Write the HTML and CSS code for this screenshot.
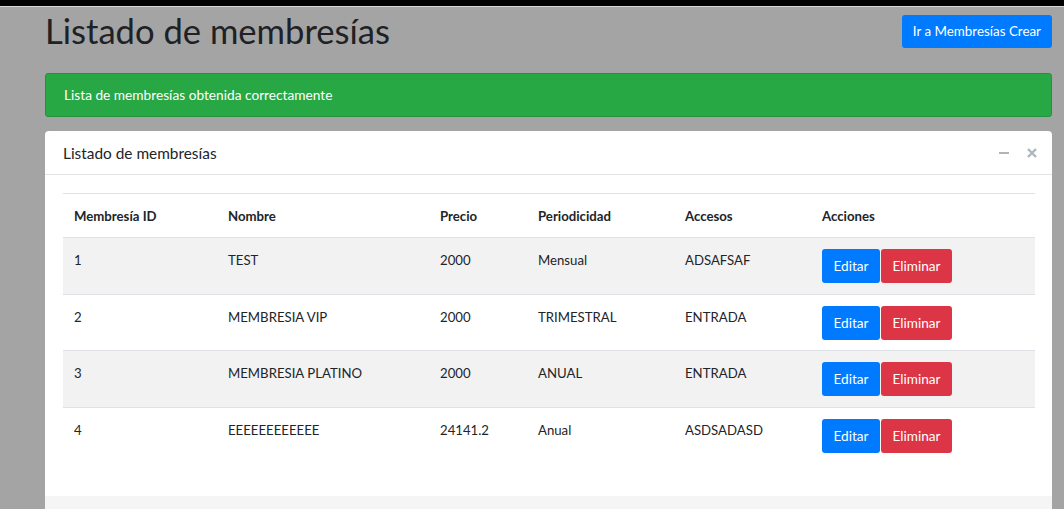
FILE: index.html
```html
<!DOCTYPE html>
<html lang="es">
<head>
<meta charset="utf-8">
<title>Listado de membresías</title>
<link rel="stylesheet" href="styles.css">
</head>
<body>
<div class="topbar"></div>
<main class="content">
  <div class="page-head">
    <h1 class="page-title">Listado de membresías</h1>
    <a class="btn btn-primary btn-create" href="#">Ir a Membresías Crear</a>
  </div>
  <div class="alert">Lista de membresías obtenida correctamente</div>
  <section class="card">
    <header class="card-header">
      <h3 class="card-title">Listado de membresías</h3>
      <div class="card-tools">
        <svg class="tool" width="12" height="12" viewBox="0 0 12 12"><rect x="1" y="5" width="10" height="2" fill="#adb5bd"/></svg>
        <svg class="tool" width="12" height="12" viewBox="0 0 12 12"><path d="M2 2 L10 10 M10 2 L2 10" stroke="#adb5bd" stroke-width="2.4"/></svg>
      </div>
    </header>
    <div class="card-body">
      <table class="table">
        <colgroup>
          <col class="c1"><col class="c2"><col class="c3"><col class="c4"><col class="c5"><col>
        </colgroup>
        <thead>
          <tr><th>Membresía ID</th><th>Nombre</th><th>Precio</th><th>Periodicidad</th><th>Accesos</th><th>Acciones</th></tr>
        </thead>
        <tbody>
          <tr class="odd"><td>1</td><td>TEST</td><td>2000</td><td>Mensual</td><td>ADSAFSAF</td><td><a class="btn btn-primary" href="#">Editar</a><a class="btn btn-danger" href="#">Eliminar</a></td></tr>
          <tr><td>2</td><td>MEMBRESIA VIP</td><td>2000</td><td>TRIMESTRAL</td><td>ENTRADA</td><td><a class="btn btn-primary" href="#">Editar</a><a class="btn btn-danger" href="#">Eliminar</a></td></tr>
          <tr class="odd"><td>3</td><td>MEMBRESIA PLATINO</td><td>2000</td><td>ANUAL</td><td>ENTRADA</td><td><a class="btn btn-primary" href="#">Editar</a><a class="btn btn-danger" href="#">Eliminar</a></td></tr>
          <tr><td>4</td><td>EEEEEEEEEEEE</td><td>24141.2</td><td>Anual</td><td>ASDSADASD</td><td><a class="btn btn-primary" href="#">Editar</a><a class="btn btn-danger" href="#">Eliminar</a></td></tr>
        </tbody>
      </table>
    </div>
    <div class="card-footer"></div>
  </section>
</main>
</body>
</html>
```

FILE: styles.css
```css
* { box-sizing: border-box; }
html, body { margin: 0; padding: 0; }
body {
  background: #a4a4a4;
  font-family: "Source Sans Pro", Lato, "Noto Sans", sans-serif;
  color: #212529;
  height: 509px;
  overflow: hidden;
}
.topbar {
  height: 7px;
  background: #000;
  border-bottom: 1px solid #d8d8d8;
}
.content {
  padding: 0 12px 0 45px;
}
.page-head {
  display: flex;
  justify-content: space-between;
  align-items: flex-start;
  height: 66px;
}
.page-title {
  margin: 4px 0 0;
  font-size: 34.6px;
  font-weight: 400;
  line-height: 40px;
  color: #1e2125;
}
.btn {
  display: inline-block;
  text-decoration: none;
  color: #fff;
  font-size: 13.6px;
  line-height: 20px;
  padding: 7px 11.5px;
  border-radius: 3px;
}
.btn-primary { background: #007bff; }
.btn-danger { background: #dc3545; }
.btn-create {
  margin-top: 8px;
  height: 33px;
  padding: 6px 11px;
  font-size: 13.4px;
}
.alert {
  background: #28a745;
  border: 1px solid #23923d;
  border-radius: 3px;
  color: #fff;
  font-size: 13.7px;
  line-height: 19px;
  padding: 11px 18px;
  height: 44px;
}
.card {
  margin-top: 14px;
  background: #fff;
  border-radius: 4px 4px 0 0;
}
.card-header {
  display: flex;
  justify-content: space-between;
  align-items: center;
  height: 44px;
  padding: 0 14px 0 18px;
  border-bottom: 1px solid #e3e3e3;
}
.card-title {
  margin: 0;
  font-size: 15.4px;
  font-weight: 400;
  color: #212529;
}
.card-tools {
  display: flex;
  gap: 16px;
  align-items: center;
}
.tool { display: block; }
.card-body {
  padding: 18px 17px 18px 18px;
}
.table {
  width: 100%;
  border-collapse: collapse;
  table-layout: fixed;
  font-size: 13.2px;
  margin-bottom: 14px;
}
.c1 { width: 154px; }
.c2 { width: 212px; }
.c3 { width: 98px; }
.c4 { width: 147px; }
.c5 { width: 137px; }
.table th, .table td {
  text-align: left;
  vertical-align: top;
  border-top: 1px solid #dee2e6;
  line-height: 20px;
}
.table th {
  padding: 12px 11px 11px;
  font-weight: 700;
}
.table td {
  padding: 12px 11px 10px;
  height: 56.67px;
}
.table td:last-child { padding-top: 11px; }
.table thead th { border-bottom: 1px solid #dee2e6; }
.table tr.odd td { background: #f2f2f2; }
.table td .btn { margin-right: 1px; }
.card-footer {
  background: #f5f5f5;
  height: 13px;
}
```
